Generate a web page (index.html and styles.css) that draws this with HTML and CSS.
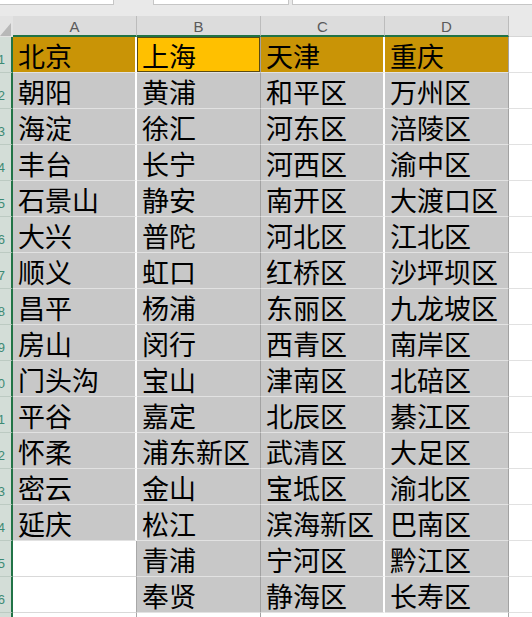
FILE: index.html
```html
<!DOCTYPE html>
<html lang="zh-CN">
<head>
<meta charset="utf-8">
<link rel="stylesheet" href="styles.css">
</head>
<body>
<div class="sheet">
  <div class="topbar">
    <div class="box box1"></div>
    <div class="gapbox"></div>
    <div class="box box2"></div>
    <div class="box box3"></div>
  </div>
  <div class="colheads">
    <div class="corner"><svg width="13" height="20" viewBox="0 0 13 20"><polygon points="0,19 11,19 11,6" fill="#b8b8b8"/></svg></div>
    <div class="ch">A</div>
    <div class="ch">B</div>
    <div class="ch">C</div>
    <div class="ch">D</div>
    <div class="chrest"></div>
  </div>
  <div class="grid" id="grid"></div>
</div>
<script src="app.js"></script>
</body>
</html>
```
FILE: app.js
```js
const A = ["北京","朝阳","海淀","丰台","石景山","大兴","顺义","昌平","房山","门头沟","平谷","怀柔","密云","延庆","",""];
const B = ["上海","黄浦","徐汇","长宁","静安","普陀","虹口","杨浦","闵行","宝山","嘉定","浦东新区","金山","松江","青浦","奉贤"];
const C = ["天津","和平区","河东区","河西区","南开区","河北区","红桥区","东丽区","西青区","津南区","北辰区","武清区","宝坻区","滨海新区","宁河区","静海区"];
const D = ["重庆","万州区","涪陵区","渝中区","大渡口区","江北区","沙坪坝区","九龙坡区","南岸区","北碚区","綦江区","大足区","渝北区","巴南区","黔江区","长寿区"];
const grid = document.getElementById('grid');
for (let i = 0; i < 17; i++) {
  const row = document.createElement('div');
  row.className = 'row';
  const rh = document.createElement('div');
  rh.className = 'rh';
  const num = document.createElement('span');
  num.textContent = String(i + 1);
  rh.appendChild(num);
  row.appendChild(rh);
  const cols = [A, B, C, D];
  cols.forEach((col, c) => {
    const cell = document.createElement('div');
    const letter = 'abcd'[c];
    let cls = 'cell col-' + letter;
    if (i >= 16 || (c === 0 && i >= 14)) cls += ' empty';
    else if (i === 0) cls += (c === 1 ? ' active' : ' head');
    cell.className = cls;
    cell.textContent = i < 16 ? col[i] : '';
    row.appendChild(cell);
  });
  const rest = document.createElement('div');
  rest.className = 'rest';
  row.appendChild(rest);
  grid.appendChild(row);
}
```
FILE: styles.css
```css
html, body {
  margin: 0;
  padding: 0;
  background: #ffffff;
}
.sheet {
  width: 532px;
  height: 617px;
  overflow: hidden;
  font-family: "Noto Sans CJK SC", "Noto Sans", sans-serif;
}
.topbar {
  height: 16px;
  background: #e9e9e9;
  display: flex;
  align-items: flex-start;
}
.box {
  height: 4px;
  background: #ffffff;
  border-bottom: 1px solid #c6c6c6;
}
.box1 { width: 113px; border-right: 1px solid #c6c6c6; }
.gapbox { width: 39px; }
.box2 { width: 134px; border-left: 1px solid #c6c6c6; border-right: 1px solid #c6c6c6; margin-right: 3px; }
.box3 { flex: 1; border-left: 1px solid #c6c6c6; }
.colheads {
  display: flex;
  height: 21px;
}
.corner {
  width: 13px;
  background: #e3e3e3;
  flex: none;
  display: flex;
  align-items: flex-end;
}
.corner svg { display: block; }
.ch {
  width: 124px;
  flex: none;
  box-sizing: border-box;
  background: #dcdcdc;
  border-right: 1px solid #bcbcbc;
  border-bottom: 2px solid #217346;
  color: #5a5a5a;
  font-family: "Liberation Sans", "DejaVu Sans", sans-serif;
  font-size: 15px;
  text-align: center;
  line-height: 19px;
  padding-top: 1px;
}
.chrest {
  flex: 1;
  background: #e9e9e9;
  border-bottom: 1px solid #d6d6d6;
  box-sizing: border-box;
}
.row {
  display: flex;
  height: 36px;
}
.rh {
  width: 13px;
  flex: none;
  box-sizing: border-box;
  background: #d3ddd7;
  border-right: 2px solid #217346;
  border-bottom: 1px solid #bccac2;
  display: flex;
  justify-content: flex-end;
  align-items: flex-end;
  overflow: hidden;
  color: #3d8a74;
  font-family: "Liberation Sans", "DejaVu Sans", sans-serif;
  font-size: 13px;
  line-height: 14px;
  padding-bottom: 5px;
}
.rh span {
  flex: none;
  margin-right: 6px;
  white-space: nowrap;
}
.cell {
  width: 124px;
  height: 36px;
  flex: none;
  box-sizing: border-box;
  background: #c8c8c8;
  border-bottom: 1px solid #e2e2e2;
  border-right: 1px solid #a2a2a2;
  font-size: 27px;
  line-height: 32px;
  color: #000000;
  padding-left: 5px;
  padding-top: 3px;
  white-space: nowrap;
}
.col-a, .col-c { border-right: 2px solid #ffffff; }
.cell.head {
  background: #c99406;
}
.cell.active {
  background: #ffc000;
  box-shadow: inset 0 0 0 1px #5b4a10;
}
.cell.empty {
  background: #ffffff;
  border-bottom: 1px solid #d9d9d9;
}
.col-a.empty { border-right: 1px solid #a8a8a8; }
.rest {
  flex: 1;
  background: #ffffff;
  border-bottom: 1px solid #e1e1e1;
  box-sizing: border-box;
}
```
